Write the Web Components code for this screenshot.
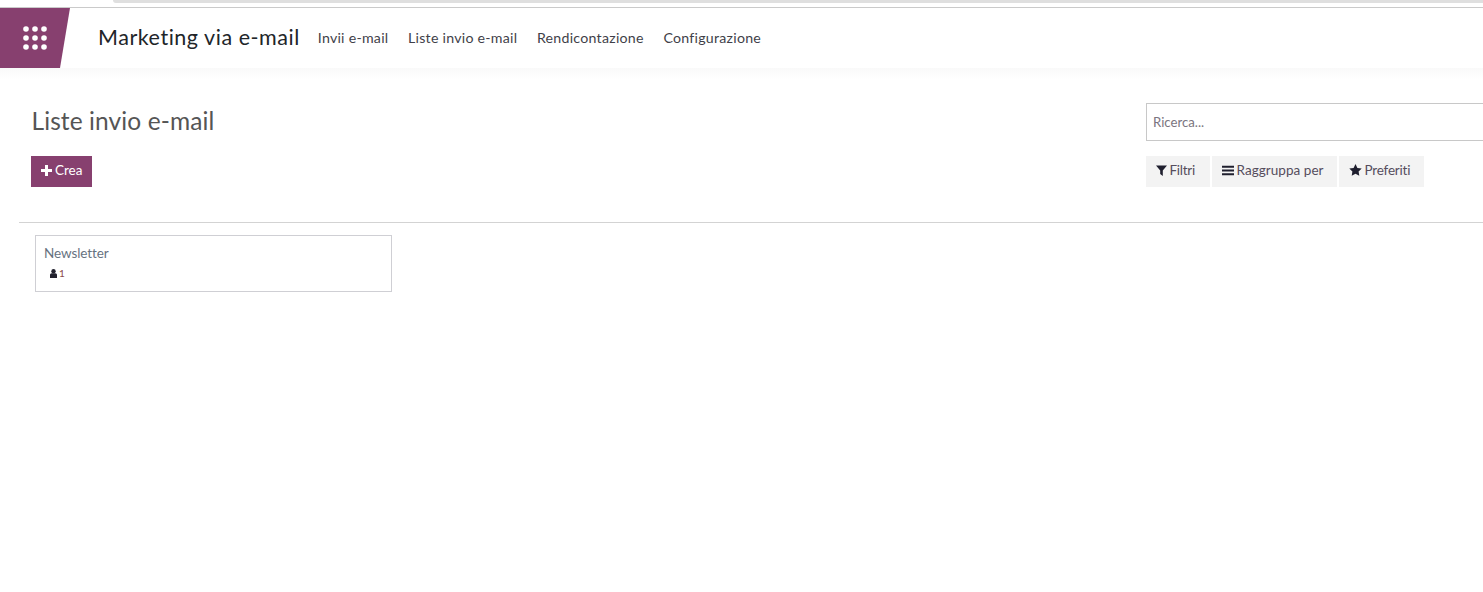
<!DOCTYPE html>
<html lang="it">
<head>
<meta charset="utf-8">
<title>Liste invio e-mail</title>
<style>
    html, body { margin: 0; padding: 0; background: #fff; }
    body { font-family: Lato, "Noto Sans", sans-serif; color: #4c4c4c; width: 1483px; height: 592px; overflow: hidden; }
</style>
</head>
<body>
<browser-edge></browser-edge>
<app-navbar title="Marketing via e-mail">
    <nav-link>Invii e-mail</nav-link>
    <nav-link>Liste invio e-mail</nav-link>
    <nav-link>Rendicontazione</nav-link>
    <nav-link>Configurazione</nav-link>
</app-navbar>
<control-panel heading="Liste invio e-mail">
    <tool-button slot="filters" icon="filter" style="--w: 64px; --ls: -.25px">Filtri</tool-button>
    <tool-button slot="filters" icon="bars" style="--w: 125px; --ls: .05px">Raggruppa per</tool-button>
    <tool-button slot="filters" icon="star" style="--w: 85px; --ls: -.2px">Preferiti</tool-button>
</control-panel>
<kanban-view>
    <list-card name="Newsletter" count="1"></list-card>
</kanban-view>

<script>
    const ICONS = {
        filter: '<svg width="11" height="11" viewBox="0 0 11 11"><path fill="#1f1f2e" d="M0 .5h11L6.8 5.4V11L4.2 9V5.4z"/></svg>',
        bars: '<svg width="12" height="11" viewBox="0 0 12 11"><path fill="#1f1f2e" d="M0 .8h12v2H0zM0 4.5h12v2H0zM0 8.2h12v2H0z"/></svg>',
        star: '<svg width="13" height="12" viewBox="0 0 13 12"><path fill="#1f1f2e" d="M6.5 0l1.9 3.9 4.3.6-3.1 3 .7 4.3-3.8-2-3.8 2 .7-4.3-3.1-3 4.3-.6z"/></svg>'
    };

    class BrowserEdge extends HTMLElement {
        constructor() {
            super();
            this.attachShadow({ mode: 'open' });
            this.shadowRoot.innerHTML = `
                <style>
                    :host { display: block; height: 8px; box-sizing: border-box; border-bottom: 1px solid #cacaca; background: #fff; padding-left: 113px; }
                    .tab { height: 3px; background: #dfdfdf; border-bottom-left-radius: 8px; }
                </style>
                <div class="tab"></div>`;
        }
    }
    customElements.define('browser-edge', BrowserEdge);

    class AppNavbar extends HTMLElement {
        constructor() {
            super();
            this.attachShadow({ mode: 'open' });
        }
        connectedCallback() {
            const title = this.getAttribute('title') || '';
            let dots = '';
            for (let y = 0; y < 3; y++) {
                for (let x = 0; x < 3; x++) {
                    dots += `<circle cx="${3 + x * 9}" cy="${3 + y * 9}" r="2.8"/>`;
                }
            }
            this.shadowRoot.innerHTML = `
                <style>
                    :host { display: flex; align-items: center; height: 60px; background: #fff; }
                    .apps { width: 70px; height: 60px; background: #87406f; clip-path: polygon(0 0, 100% 0, 60px 100%, 0 100%); display: flex; align-items: center; padding-left: 23px; box-sizing: border-box; }
                    svg { fill: #fff; display: block; }
                    .brand { margin: 0 0 2px 28px; font-size: 21.5px; color: #212529; letter-spacing: .53px; white-space: nowrap; }
                    nav { display: flex; margin: 0 0 2px 18px; gap: 19.6px; }
                </style>
                <div class="apps"><svg width="24" height="24" viewBox="0 0 24 24">${dots}</svg></div>
                <div class="brand">${title}</div>
                <nav><slot></slot></nav>`;
        }
    }
    customElements.define('app-navbar', AppNavbar);

    class NavLink extends HTMLElement {
        constructor() {
            super();
            this.attachShadow({ mode: 'open' });
            this.shadowRoot.innerHTML = `
                <style>
                    :host { display: block; font-size: 14.2px; color: #3f3f49; letter-spacing: .25px; white-space: nowrap; }
                </style>
                <slot></slot>`;
        }
    }
    customElements.define('nav-link', NavLink);

    class ControlPanel extends HTMLElement {
        constructor() {
            super();
            this.attachShadow({ mode: 'open' });
        }
        connectedCallback() {
            this.shadowRoot.innerHTML = `
                <style>
                    :host { display: block; height: 155px; background: linear-gradient(#f9f9f9, #fff 12px); }
                    .wrap { display: grid; grid-template-columns: 1fr 337px; height: 100%; margin-left: 19px; box-sizing: border-box; padding-top: 35px; border-bottom: 1px solid #d3d3d3; }
                    h1 { margin: 3px 0 0 12.5px; font-weight: 400; font-size: 24.5px; line-height: 30px; color: #555; letter-spacing: .1px; }
                    .create { display: flex; align-items: center; gap: 3px; margin: 20px 0 0 12px; width: 61px; height: 31px; box-sizing: border-box; padding: 0 0 3px 10px; background: #87406f; color: #fff; font-size: 13.5px; }
                    .search { height: 38px; box-sizing: border-box; border: 1px solid #c8c8c8; border-right: 0; padding-left: 6px; display: flex; align-items: center; font-size: 13.2px; color: #7b7580; }
                    .filters { display: flex; gap: 2px; margin-top: 15px; }
                </style>
                <div class="wrap">
                    <div>
                        <h1>${this.getAttribute('heading') || ''}</h1>
                        <div class="create"><svg width="11" height="11" viewBox="0 0 11 11"><path fill="#fff" d="M4 0h3v4h4v3H7v4H4V7H0V4h4z"/></svg>Crea</div>
                    </div>
                    <div>
                        <div class="search">Ricerca...</div>
                        <div class="filters"><slot name="filters"></slot></div>
                    </div>
                </div>`;
        }
    }
    customElements.define('control-panel', ControlPanel);

    class ToolButton extends HTMLElement {
        constructor() {
            super();
            this.attachShadow({ mode: 'open' });
        }
        connectedCallback() {
            this.shadowRoot.innerHTML = `
                <style>
                    :host { display: flex; align-items: center; gap: 2.5px; width: var(--w); height: 31px; box-sizing: border-box; padding: 0 0 3px 10px; background: #f3f3f3; color: #554d5d; font-size: 13.5px; letter-spacing: var(--ls); white-space: nowrap; }
                    svg { display: block; }
                </style>
                ${ICONS[this.getAttribute('icon')] || ''}<slot></slot>`;
        }
    }
    customElements.define('tool-button', ToolButton);

    class KanbanView extends HTMLElement {
        constructor() {
            super();
            this.attachShadow({ mode: 'open' });
            this.shadowRoot.innerHTML = `
                <style>
                    :host { display: block; padding: 12px 0 0 35px; }
                </style>
                <slot></slot>`;
        }
    }
    customElements.define('kanban-view', KanbanView);

    class ListCard extends HTMLElement {
        constructor() {
            super();
            this.attachShadow({ mode: 'open' });
        }
        connectedCallback() {
            this.shadowRoot.innerHTML = `
                <style>
                    :host { display: block; width: 357px; height: 57px; box-sizing: border-box; border: 1px solid #cfcfd4; padding: 8px 0 0 8px; }
                    .name { font-size: 13.5px; line-height: 18px; color: #66727f; letter-spacing: -.1px; }
                    .count { display: flex; align-items: center; gap: 2px; margin: 5px 0 0 6px; font-size: 10px; line-height: 12px; color: #8a4a4a; }
                    svg { display: block; }
                </style>
                <div class="name">${this.getAttribute('name') || ''}</div>
                <div class="count"><svg width="7" height="9" viewBox="0 0 7 9"><circle cx="3.5" cy="2.2" r="2.2" fill="#22222e"/><path fill="#22222e" d="M0 9V6C0 5 .8 4.3 1.6 4.3h3.8C6.2 4.3 7 5 7 6V9z"/></svg>${this.getAttribute('count') || ''}</div>`;
        }
    }
    customElements.define('list-card', ListCard);
</script>
</body>
</html>
